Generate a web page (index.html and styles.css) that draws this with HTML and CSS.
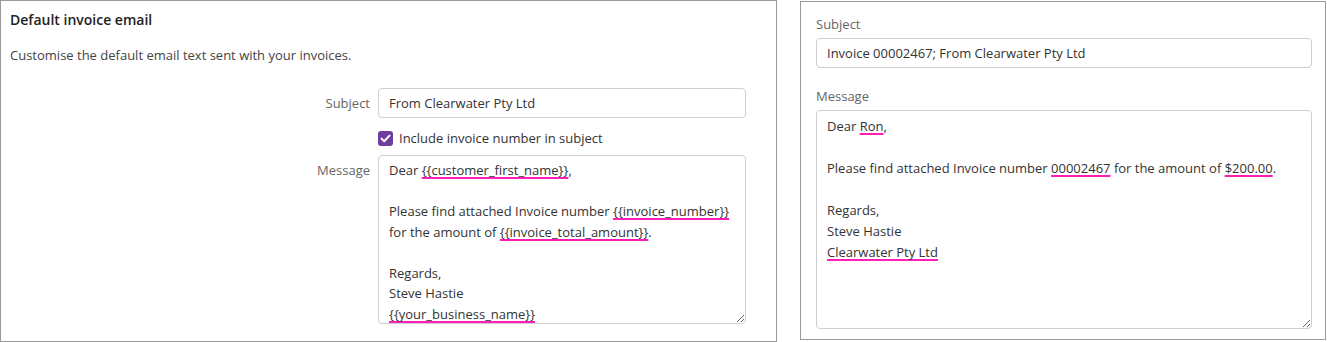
FILE: index.html
```html
<!DOCTYPE html>
<html>
<head>
<meta charset="utf-8">
<link rel="stylesheet" href="styles.css">
</head>
<body>
<div class="page">
  <section class="panel panel-left">
    <h2 class="title">Default invoice email</h2>
    <p class="desc">Customise the default email text sent with your invoices.</p>
    <div class="form">
      <label class="label">Subject</label>
      <div class="input">From Clearwater Pty Ltd</div>
      <div></div>
      <div class="check-row">
        <span class="checkbox"><svg width="11" height="9" viewBox="0 0 11 9"><path d="M1.5 4.6 L4.2 7.2 L9.5 1.6" fill="none" stroke="#fff" stroke-width="2" stroke-linecap="round" stroke-linejoin="round"/></svg></span>
        <span>Include invoice number in subject</span>
      </div>
      <label class="label label-msg">Message</label>
      <div class="textarea textarea-left">
        <div>Dear <span class="tag">{{customer_first_name}}</span>,</div>
        <div class="blank"></div>
        <div>Please find attached Invoice number <span class="tag">{{invoice_number}}</span></div>
        <div>for the amount of <span class="tag">{{invoice_total_amount}}</span>.</div>
        <div class="blank"></div>
        <div>Regards,</div>
        <div>Steve Hastie</div>
        <div><span class="tag">{{your_business_name}}</span></div>
      </div>
    </div>
  </section>
  <section class="panel panel-right">
    <div class="field-label">Subject</div>
    <div class="input input-right">Invoice 00002467; From Clearwater Pty Ltd</div>
    <div class="field-label field-label-msg">Message</div>
    <div class="textarea textarea-right">
      <div>Dear <span class="tag">Ron</span>,</div>
      <div class="blank"></div>
      <div>Please find attached Invoice number <span class="tag">00002467</span> for the amount of <span class="tag">$200.00</span>.</div>
      <div class="blank"></div>
      <div>Regards,</div>
      <div>Steve Hastie</div>
      <div><span class="tag">Clearwater Pty Ltd</span></div>
    </div>
  </section>
</div>
</body>
</html>
```

FILE: styles.css
```css
html, body {
  margin: 0;
  padding: 0;
  background: #fff;
}
body {
  font-family: "Open Sans", "Noto Sans", sans-serif;
  font-size: 13px;
  color: #333;
}
.page {
  display: flex;
  align-items: flex-start;
  gap: 23px;
  width: 1327px;
  height: 342px;
}
.panel {
  box-sizing: border-box;
  border: 1px solid #9a9a9a;
  background: #fff;
}
.panel-left {
  width: 777px;
  height: 342px;
  padding: 9px 9px 0 9px;
}
.panel-right {
  width: 526px;
  height: 339px;
  margin-top: 1px;
  padding: 12px 13px 0 15px;
}
.title {
  margin: 0;
  font-size: 14px;
  font-weight: 600;
  color: #222;
  line-height: 20px;
}
.desc {
  margin: 15px 0 0 0;
  line-height: 20px;
  color: #444;
}
.form {
  display: grid;
  grid-template-columns: 360px 368px;
  column-gap: 8px;
  margin-top: 23px;
}
.label {
  text-align: right;
  color: #666;
  line-height: 30px;
}
.input {
  box-sizing: border-box;
  height: 30px;
  border: 1px solid #cfcfcf;
  border-radius: 4px;
  padding: 0 10px;
  line-height: 28px;
  color: #333;
}
.check-row {
  display: flex;
  align-items: center;
  gap: 6px;
  height: 20px;
  margin: 10px 0 7px 0;
  color: #333;
}
.checkbox {
  display: inline-flex;
  align-items: center;
  justify-content: center;
  width: 15px;
  height: 15px;
  border-radius: 3px;
  background: #6f3d9e;
}
.textarea {
  box-sizing: border-box;
  border: 1px solid #cfcfcf;
  border-radius: 4px;
  padding: 5px 10px;
  color: #333;
  overflow: hidden;
  resize: both;
}
.textarea-left {
  height: 169px;
  padding-top: 4px;
  line-height: 20.5px;
}
.textarea-left .blank {
  height: 20.5px;
}
.textarea-right {
  height: 219px;
  margin-top: 4px;
  line-height: 21px;
}
.textarea-right .blank {
  height: 21px;
}
.tag {
  text-decoration: underline;
  text-decoration-color: #ff1fb8;
  text-decoration-thickness: 2px;
  text-underline-offset: 2px;
  text-decoration-skip-ink: none;
}
.field-label {
  color: #666;
  line-height: 20px;
}
.input-right {
  margin-top: 4px;
}
.field-label-msg {
  margin-top: 18px;
}
```
